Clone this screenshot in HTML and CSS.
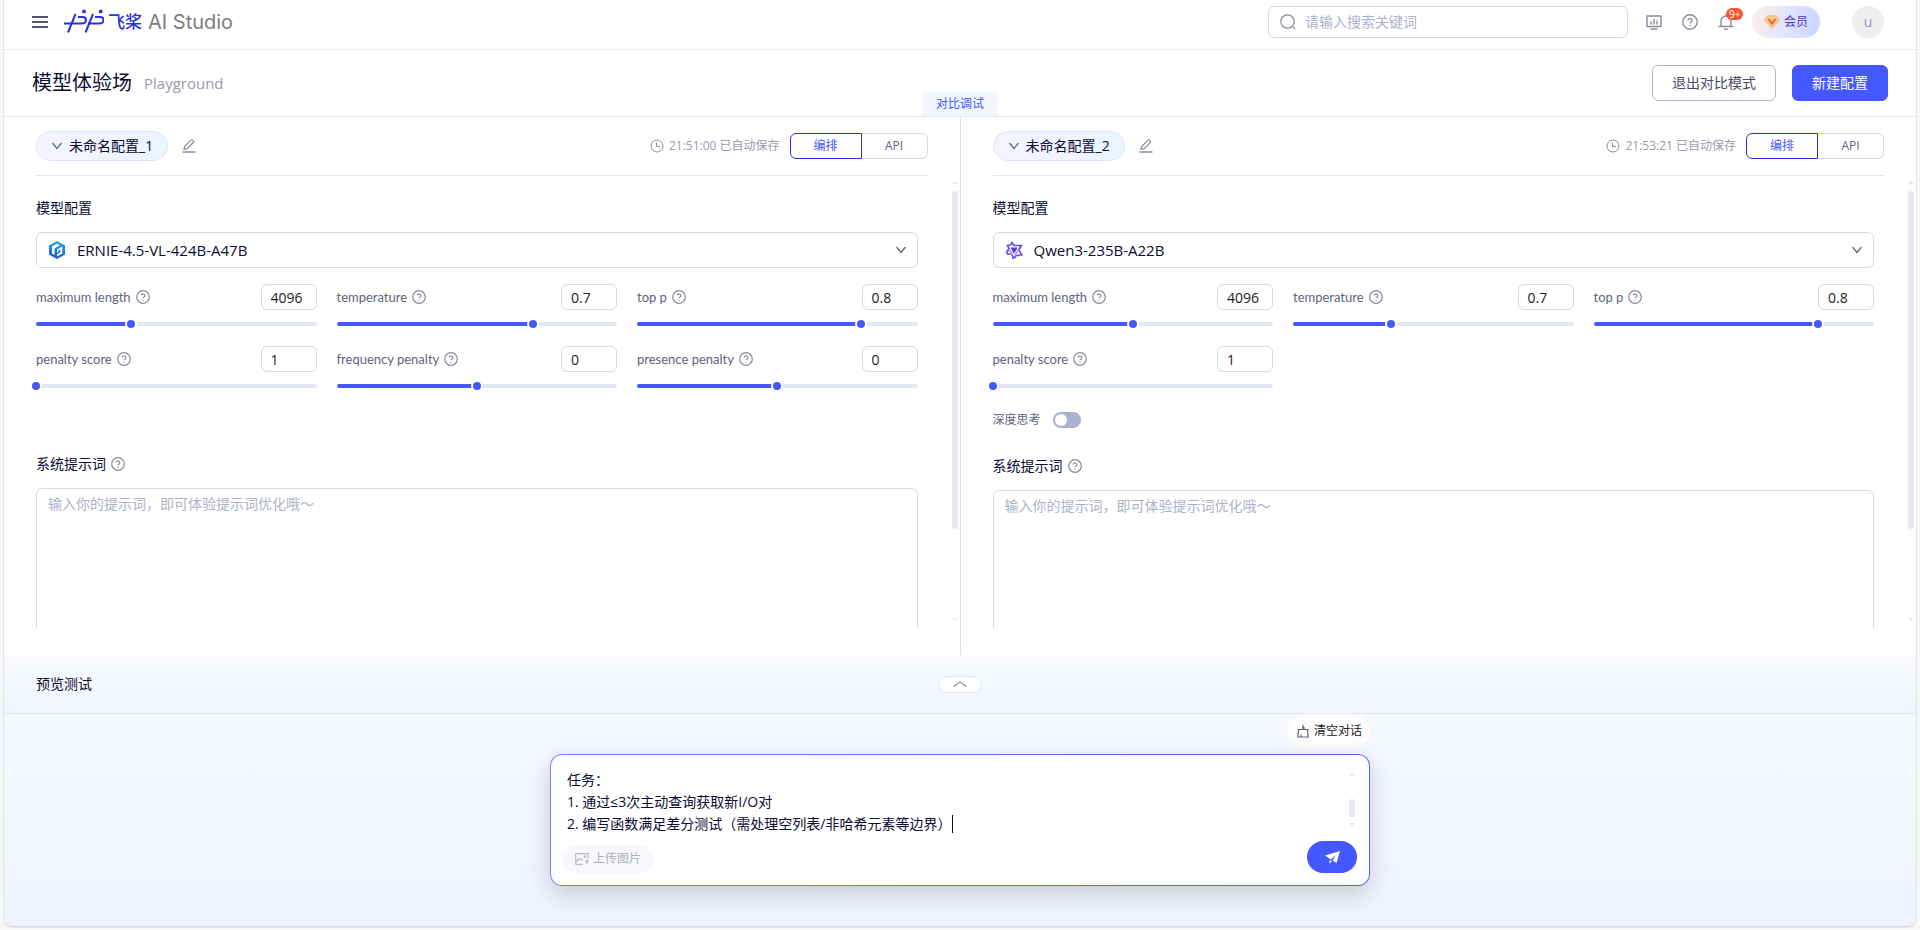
FILE: index.html
```html
<!DOCTYPE html>
<html lang="zh-CN">
<head>
    <meta charset="UTF-8">
    <meta name="viewport" content="width=device-width, initial-scale=1.0">
    <title>飞桨 AI Studio</title>
    <link rel="stylesheet" href="styles.css">
</head>

<body>
    <!-- shared icons -->
    <svg class="sprite" aria-hidden="true">
        <symbol id="i-help" viewBox="0 0 16 16">
            <circle cx="8" cy="8" r="7.2"/>
            <path d="M6 6.4a2 2 0 1 1 2.9 1.8c-.6.3-.9.6-.9 1.3M8 11v1.2"/>
        </symbol>
        <symbol id="i-down" viewBox="0 0 12 12"><path d="M1.5 3l4.5 5.5L10.500 3"/></symbol>
        <symbol id="i-edit" viewBox="0 0 14 14">
            <path d="M2 10.300l.6-2.700L9 1.200a1.200 1.200 0 0 1 1.700 0l.6.6a1.200 1.200 0 0 1 0 1.700L4.800 9.900z"/>
            <path d="M.5 13h13" stroke-width="1.500"/>
        </symbol>
        <symbol id="i-clock" viewBox="0 0 14 14"><circle cx="7" cy="7" r="6"/><path d="M6.500 3.500v4H10"/></symbol>
    </svg>

    <div class="app">
        <header class="topbar">
            <button class="menu-btn" aria-label="菜单">
                <svg viewBox="0 0 16 12"><path d="M0 1h16M0 6h16M0 11h16"/></svg>
            </button>
            <a class="brand" href="#">
                <svg class="brand-mark" viewBox="0 0 40 25">
                    <path d="M0 14.500h17.500c3 0 4.500-1.500 4.500-3.500S20.500 8 19 8h-5M11.500 5L4 23.500M29 5l-7.500 18.500M24 14.500h11c3 0 4.500-1.500 4.500-3.500S38 8 36.500 8H31"/>
                    <circle cx="20" cy="2.400" r="1.900"/><circle cx="36.700" cy="2.400" r="1.900"/>
                </svg>
                <span class="brand-cn">飞桨</span>
                <span class="brand-en">AI Studio</span>
            </a>
            <div class="search">
                <svg viewBox="0 0 16 16"><circle cx="7.500" cy="7.500" r="6.700"/><path d="M12.200 12.200l3 3"/></svg>
                <input type="text" placeholder="请输入搜索关键词" aria-label="搜索">
            </div>
            <nav class="tools">
                <button aria-label="控制台">
                    <svg viewBox="0 0 16 16"><path d="M1 2h14v10.500H1zM4.500 15h7M5 7.500v3M8 5v5.500M11 6.500v4"/></svg>
                </button>
                <button aria-label="帮助"><svg><use href="#i-help"/></svg></button>
                <button class="bell" aria-label="消息">
                    <svg viewBox="0 0 16 16"><path d="M.5 12.500h15M3 12.500V7a5 5 0 0 1 10 0v5.500M8 2V.5M6.300 14.500a1.800 1.500 0 0 0 3.400 0"/></svg>
                    <span class="badge">9+</span>
                </button>
            </nav>
            <a class="vip" href="#">
                <svg viewBox="0 0 16 14"><path fill="#fbc48a" d="M3.500 0h9L16 5l-8 9L0 5z"/><path fill="none" stroke="#d9622b" stroke-width="1.700" d="M4.500 4L8 8.500 11.500 4"/></svg>
                <span>会员</span>
            </a>
            <a class="avatar" href="#">u</a>
        </header>

        <div class="titlebar">
            <h1>模型体验场</h1>
            <span class="subtitle">Playground</span>
            <button class="btn">退出对比模式</button>
            <button class="btn btn-primary">新建配置</button>
            <span class="compare-tab">对比调试</span>
        </div>

        <main class="workspace">
            <section class="pane">
                <div class="pane-head">
                    <button class="config-name"><svg><use href="#i-down"/></svg>未命名配置_1</button>
                    <button class="edit-btn" aria-label="重命名"><svg><use href="#i-edit"/></svg></button>
                    <span class="saved"><svg><use href="#i-clock"/></svg>21:51:00 已自动保存</span>
                    <div class="segment"><button class="active">编排</button><button>API</button></div>
                </div>
                <div class="pane-body">
                    <div class="settings">
                        <label class="section-title" for="model1">模型配置</label>
                        <div class="model-select">
                            <svg class="model-icon" viewBox="0 0 18 18">
                                <defs><linearGradient id="ernie" x1="0" y1="0" x2="0" y2="1"><stop offset="0" stop-color="#22a6f7"/><stop offset="1" stop-color="#1556c8"/></linearGradient></defs>
                                <path fill="url(#ernie)" d="M9 0l8 4.500v9L9 18l-8-4.500v-9z"/>
                                <path fill="#fff" d="M9 2.600l3 1.700-5.500 3.200v6.600L4 12.600V5.500z"/>
                                <path fill="#fff" d="M14.300 5.600v7L9 15.500v-2.200l3.300-1.900V8.300L10.500 9.300v1.500L9 11.700V8.500z"/>
                            </svg>
                            <select id="model1"><option>ERNIE-4.5-VL-424B-A47B</option></select>
                            <svg class="arrow"><use href="#i-down"/></svg>
                        </div>
                        <div class="params">
                            <div class="param">
                                <label for="len1">maximum length</label><svg class="help"><use href="#i-help"/></svg>
                                <input class="num" id="len1" type="text" value="4096">
                                <div class="slider" style="--v: 34%"><input type="range" aria-label="maximum length" value="34"></div>
                            </div>
                            <div class="param">
                                <label for="temp1">temperature</label><svg class="help"><use href="#i-help"/></svg>
                                <input class="num" id="temp1" type="text" value="0.7">
                                <div class="slider" style="--v: 70%"><input type="range" aria-label="temperature" value="70"></div>
                            </div>
                            <div class="param">
                                <label for="topp1">top p</label><svg class="help"><use href="#i-help"/></svg>
                                <input class="num" id="topp1" type="text" value="0.8">
                                <div class="slider" style="--v: 80%"><input type="range" aria-label="top p" value="80"></div>
                            </div>
                            <div class="param">
                                <label for="score1">penalty score</label><svg class="help"><use href="#i-help"/></svg>
                                <input class="num" id="score1" type="text" value="1">
                                <div class="slider" style="--v: 0%"><input type="range" aria-label="penalty score" value="0"></div>
                            </div>
                            <div class="param">
                                <label for="freq1">frequency penalty</label><svg class="help"><use href="#i-help"/></svg>
                                <input class="num" id="freq1" type="text" value="0">
                                <div class="slider" style="--v: 50%"><input type="range" aria-label="frequency penalty" value="50"></div>
                            </div>
                            <div class="param">
                                <label for="pres1">presence penalty</label><svg class="help"><use href="#i-help"/></svg>
                                <input class="num" id="pres1" type="text" value="0">
                                <div class="slider" style="--v: 50%"><input type="range" aria-label="presence penalty" value="50"></div>
                            </div>
                        </div>
                        <div class="prompt-title prompt-gap">
                            <label for="prompt1">系统提示词</label><svg class="help"><use href="#i-help"/></svg>
                        </div>
                        <textarea class="prompt" id="prompt1" placeholder="输入你的提示词，即可体验提示词优化哦～"></textarea>
                    </div>
                    <div class="scrollbar"><i class="up"></i><i class="thumb"></i><i class="down"></i></div>
                </div>
            </section>

            <section class="pane">
                <div class="pane-head">
                    <button class="config-name"><svg><use href="#i-down"/></svg>未命名配置_2</button>
                    <button class="edit-btn" aria-label="重命名"><svg><use href="#i-edit"/></svg></button>
                    <span class="saved"><svg><use href="#i-clock"/></svg>21:53:21 已自动保存</span>
                    <div class="segment"><button class="active">编排</button><button>API</button></div>
                </div>
                <div class="pane-body">
                    <div class="settings">
                        <label class="section-title" for="model2">模型配置</label>
                        <div class="model-select">
                            <svg class="model-icon" viewBox="0 0 18 18">
                                <g fill="none" stroke="#6b4be8" stroke-width="1.700">
                                    <path d="M6.800 1.200L9 4.500h7.300l-1.500 3M16 5l-2.200 3.800 3 5.200h-3.500M14.500 14.500H11L9.500 17H7M8.500 16.500l-2-3.500H2.500l-1.200-2.200M2 11l2-3.500L2.500 4.500 5.500 4M5.500 4.200L7.300 1"/>
                                    <path d="M4 8l3.500 6M13.500 8.500L10 14.500" stroke="#a898f5"/>
                                </g>
                                <path fill="#5b35e0" d="M5.500 6.500h7.200L9 12.800z"/>
                            </svg>
                            <select id="model2"><option>Qwen3-235B-A22B</option></select>
                            <svg class="arrow"><use href="#i-down"/></svg>
                        </div>
                        <div class="params">
                            <div class="param">
                                <label for="len2">maximum length</label><svg class="help"><use href="#i-help"/></svg>
                                <input class="num" id="len2" type="text" value="4096">
                                <div class="slider" style="--v: 50%"><input type="range" aria-label="maximum length" value="50"></div>
                            </div>
                            <div class="param">
                                <label for="temp2">temperature</label><svg class="help"><use href="#i-help"/></svg>
                                <input class="num" id="temp2" type="text" value="0.7">
                                <div class="slider" style="--v: 35%"><input type="range" aria-label="temperature" value="35"></div>
                            </div>
                            <div class="param">
                                <label for="topp2">top p</label><svg class="help"><use href="#i-help"/></svg>
                                <input class="num" id="topp2" type="text" value="0.8">
                                <div class="slider" style="--v: 80%"><input type="range" aria-label="top p" value="80"></div>
                            </div>
                            <div class="param">
                                <label for="score2">penalty score</label><svg class="help"><use href="#i-help"/></svg>
                                <input class="num" id="score2" type="text" value="1">
                                <div class="slider" style="--v: 0%"><input type="range" aria-label="penalty score" value="0"></div>
                            </div>
                        </div>
                        <div class="thinking">
                            <label for="think">深度思考</label>
                            <input class="switch" id="think" type="checkbox">
                        </div>
                        <div class="prompt-title">
                            <label for="prompt2">系统提示词</label><svg class="help"><use href="#i-help"/></svg>
                        </div>
                        <textarea class="prompt" id="prompt2" placeholder="输入你的提示词，即可体验提示词优化哦～"></textarea>
                    </div>
                    <div class="scrollbar"><i class="up"></i><i class="thumb"></i><i class="down"></i></div>
                </div>
            </section>
        </main>

        <section class="preview">
            <div class="preview-head">
                <h2>预览测试</h2>
                <button class="collapse" aria-label="展开"><svg viewBox="0 0 14 6"><path d="M.5 5.500L7 1l6.500 4.500"/></svg></button>
            </div>
            <div class="chat">
                <button class="clear-btn">
                    <svg viewBox="0 0 12 13"><path d="M6 0v4M.5 4.500h11M1.500 5L.8 12h10.400l-.7-7M4 12V9.500M5 2.500h2v2"/></svg>
                    清空对话
                </button>
                <div class="composer">
                    <div class="composer-text">
                        <textarea rows="3" aria-label="对话输入">任务：
1. 通过≤3次主动查询获取新I/O对
2. 编写函数满足差分测试（需处理空列表/非哈希元素等边界）</textarea>
                        <span class="caret"></span>
                        <div class="scrollbar"><i class="up"></i><i class="thumb"></i><i class="down"></i></div>
                    </div>
                    <div class="composer-bar">
                        <button class="upload-btn">
                            <svg viewBox="0 0 14 12"><path d="M8 11.300H.7V.7h12.600v5M1 9l3.500-3.500L8 7.500M12 11.500V7.500M10.300 9L12 7.300 13.700 9"/><circle cx="10" cy="3.500" r=".8"/></svg>
                            上传图片
                        </button>
                        <button class="send-btn" aria-label="发送">
                            <svg viewBox="0 0 15 13"><path d="M0 4.500L15 0l-3.500 12-4-2.500L11 4 5.800 8.500zM4.500 9l2.500 1.500-2.500 2z"/></svg>
                        </button>
                    </div>
                </div>
            </div>
        </section>
    </div>
</body>
</html>
```
FILE: styles.css
```css
* {
    box-sizing: border-box;
}

body {
    margin: 0;
    padding: 0 4px 3px;
    height: 100vh;
    background-color: #f7f7f8;
    font-family: "Open Sans", "Noto Sans CJK SC", sans-serif;
    font-size: 14px;
    line-height: 22px;
    color: #0b0b33;
}

button, input, select, textarea {
    font: inherit;
    color: inherit;
}

button {
    padding: 0;
    border: none;
    background: none;
    cursor: pointer;
}

a {
    text-decoration: none;
}

h1, h2 {
    margin: 0;
    font-weight: normal;
}

svg {
    display: block;
    flex: none;
    fill: none;
    stroke: #8a8aa3;
    stroke-width: 1.2;
}

.sprite {
    position: absolute;
    width: 0;
    height: 0;
}

.app {
    display: flex;
    flex-direction: column;
    height: 100%;
    background-color: white;
    border-bottom: 1px solid #d9dbe3;
    border-radius: 0 0 8px 8px;
    box-shadow: 0 0 0 1px #e6e6ea;
    overflow: hidden;
}

/* top bar */
.topbar {
    display: flex;
    align-items: center;
    height: 50px;
    padding: 0 32px 6px 28px;
    border-bottom: 1px solid #e4e8f5;
}

.menu-btn {
    margin-right: 16px;
}

.menu-btn svg {
    width: 16px;
    height: 12px;
    stroke: #56567a;
    stroke-width: 2;
}

.brand {
    display: flex;
    align-items: center;
    gap: 4px;
    margin-right: auto;
}

.brand-mark {
    width: 40px;
    height: 25px;
    stroke: #2932e1;
    stroke-width: 2;
}

.brand-mark circle {
    fill: #2932e1;
    stroke: none;
}

.brand-cn {
    font-size: 17px;
    font-weight: 500;
    color: #2932e1;
}

.brand-en {
    margin-left: 2px;
    font-family: Inter, sans-serif;
    font-size: 20px;
    color: #7d7d7d;
}

.search {
    display: flex;
    align-items: center;
    gap: 9px;
    width: 360px;
    height: 32px;
    margin-right: 18px;
    padding: 0 11px;
    border: 1px solid #d5d8ea;
    border-radius: 6px;
}

.search svg {
    width: 16px;
    height: 16px;
}

.search input {
    flex: 1;
    padding: 0;
    border: none;
    outline: none;
    background: none;
}

::placeholder {
    color: #adb1cb;
}

.tools {
    display: flex;
    gap: 20px;
}

.tools svg {
    width: 16px;
    height: 16px;
    stroke: #8a8aa3;
    stroke-width: 1.4;
}

.bell {
    position: relative;
}

.badge {
    position: absolute;
    left: 8px;
    top: -6px;
    padding: 0 3px;
    border-radius: 6px;
    background-color: #ff5630;
    color: white;
    font-size: 10px;
    line-height: 12px;
}

.vip {
    display: flex;
    align-items: center;
    gap: 4px;
    height: 32px;
    margin-left: 18px;
    padding: 0 12px;
    border-radius: 16px;
    background: linear-gradient(100deg, #fdf0ec, #e1e4fc 50%, #cbd3ff);
    color: #5236c4;
    font-size: 12px;
}

.vip svg {
    width: 16px;
    height: 14px;
    stroke: none;
}

.avatar {
    width: 32px;
    height: 32px;
    margin-left: 32px;
    border-radius: 50%;
    background-color: #efeff0;
    color: #8c9cc4;
    line-height: 32px;
    text-align: center;
}

/* page title */
.titlebar {
    position: relative;
    display: flex;
    align-items: center;
    height: 67px;
    padding: 0 28px;
    border-bottom: 1px solid #e4e8f5;
}

.titlebar h1 {
    font-size: 20px;
}

.subtitle {
    margin-left: 12px;
    margin-right: auto;
    color: #9a9ab0;
    font-size: 15px;
}

.btn {
    height: 36px;
    padding: 0 19px;
    border: 1px solid #b2b6cc;
    border-radius: 6px;
    color: #4a4a66;
}

.btn-primary {
    margin-left: 16px;
    border-color: #4558ff;
    background-color: #4558ff;
    color: white;
}

.compare-tab {
    position: absolute;
    left: 50%;
    bottom: 0;
    width: 76px;
    height: 24px;
    margin-left: -38px;
    border-radius: 4px 4px 0 0;
    background-color: #f0f5ff;
    color: #4558ff;
    font-size: 12px;
    line-height: 24px;
    text-align: center;
}

/* the two configs side by side */
.workspace {
    flex: 1;
    display: flex;
    min-height: 0;
}

.pane {
    flex: 1;
    display: flex;
    flex-direction: column;
    min-width: 0;
    padding: 0 2px 27px 24px;
}

.pane + .pane {
    border-left: 1px solid #d8dced;
}

.pane-head {
    display: flex;
    align-items: center;
    height: 59px;
    margin-left: 8px;
    margin-right: 30px;
    padding: 12px 0;
    border-bottom: 1px solid #e4e8f5;
}

.config-name {
    display: flex;
    align-items: center;
    gap: 6px;
    height: 30px;
    padding: 0 14px;
    border: 1px solid #dbe4fb;
    border-radius: 15px;
    background: linear-gradient(90deg, #f4f4ff, #ecf4ff);
}

.config-name svg {
    width: 12px;
    height: 12px;
    stroke: #62627f;
}

.edit-btn {
    margin-left: 14px;
    margin-right: auto;
}

.edit-btn svg {
    width: 14px;
    height: 14px;
}

.saved {
    display: flex;
    align-items: center;
    gap: 5px;
    margin-right: 10px;
    color: #9a9ab0;
    font-size: 12px;
}

.saved svg {
    width: 14px;
    height: 14px;
    stroke-width: 1;
}

.segment {
    display: flex;
    width: 138px;
    height: 26px;
    font-size: 12px;
}

.segment button {
    flex: 1;
    border: 1px solid #d9d9df;
    border-left: none;
    border-radius: 0 6px 6px 0;
    color: #62627f;
}

.segment .active {
    flex: none;
    width: 72px;
    border: 1px solid #2932e1;
    border-radius: 6px 0 0 6px;
    color: #4558ff;
}

.pane-body {
    flex: 1;
    display: flex;
    gap: 34px;
    min-height: 0;
    overflow: hidden;
}

.settings {
    flex: 1;
    min-width: 0;
    padding-top: 21px;
    padding-left: 8px;
}

.section-title {
    display: block;
}

.model-select {
    display: flex;
    align-items: center;
    gap: 7px;
    height: 36px;
    margin: 13px 0 16px;
    padding: 0 10px 0 11px;
    border: 1px solid #d5d8ea;
    border-radius: 6px;
}

.model-select select {
    flex: 1;
    padding: 0 4px;
    border: none;
    outline: none;
    appearance: none;
    background: none;
    font-size: 15px;
}

.model-icon {
    width: 18px;
    height: 18px;
    stroke: none;
}

.arrow {
    width: 12px;
    height: 12px;
    stroke: #62627f;
}

.params {
    display: grid;
    grid-template-columns: repeat(3, 1fr);
    gap: 18px 20px;
}

.param {
    display: flex;
    flex-wrap: wrap;
    align-items: center;
    align-content: flex-start;
    height: 44px;
}

.param label {
    color: #62627f;
    font-family: Lato, sans-serif;
    font-size: 13px;
}

.help {
    width: 14px;
    height: 14px;
    margin-left: 5px;
    stroke-width: 1.4;
}

.num {
    width: 56px;
    height: 26px;
    margin-left: auto;
    padding: 0 9px;
    border: 1px solid #d9d9df;
    border-radius: 6px;
    color: #222;
}

/* filled part of the track follows --v */
.slider {
    width: 100%;
    height: 4px;
    margin-top: 12px;
    border-radius: 2px;
    background: linear-gradient(90deg, #4558ff var(--v), #e4e8f4 var(--v));
}

.slider input {
    display: block;
    width: calc(100% + 12px);
    height: 4px;
    margin: 0 -6px;
    appearance: none;
    background: none;
}

.slider input::-webkit-slider-thumb {
    appearance: none;
    width: 12px;
    height: 12px;
    border: 2px solid white;
    border-radius: 50%;
    background-color: #4558ff;
}

.thinking {
    display: flex;
    align-items: center;
    gap: 12px;
    margin-top: 19px;
    margin-bottom: 24px;
    color: #62627f;
    font-size: 12px;
}

.switch {
    width: 28px;
    height: 16px;
    margin: 0;
    padding: 2px;
    appearance: none;
    border-radius: 8px;
    background-color: #adb1cb;
}

.switch::before {
    content: "";
    display: block;
    width: 12px;
    height: 12px;
    border-radius: 50%;
    background-color: white;
}

.prompt-title {
    display: flex;
    align-items: center;
    margin-bottom: 13px;
}

.prompt-gap {
    margin-top: 63px;
}

.prompt {
    display: block;
    width: 100%;
    height: 300px;
    padding: 4px 11px;
    border: 1px solid #d9d9df;
    border-radius: 6px;
    outline: none;
    resize: none;
}

.scrollbar {
    display: flex;
    flex-direction: column;
    width: 6px;
    padding: 5px 0 7px;
}

.scrollbar .up {
    border: 3px solid transparent;
    border-top: none;
    border-bottom-color: #e4e8f4;
}

.scrollbar .thumb {
    height: 338px;
    margin: 7px 0 auto;
    border-radius: 3px;
    background-color: #e4e8f4;
}

.scrollbar .down {
    border: 3px solid transparent;
    border-bottom: none;
    border-top-color: #e4e8f4;
}

/* preview */
.preview-head {
    display: grid;
    grid-template-columns: 1fr auto 1fr;
    align-items: center;
    height: 59px;
    padding: 0 32px;
    border-bottom: 1px solid #e4e8f5;
    background: linear-gradient(#f8faff, #f0f4fe);
}

.preview-head h2 {
    font-size: 14px;
}

.collapse {
    display: flex;
    align-items: center;
    justify-content: center;
    width: 44px;
    height: 17px;
    border: 1px solid #e4e8f5;
    border-radius: 9px;
    background-color: white;
}

.collapse svg {
    width: 14px;
    height: 6px;
}

.chat {
    display: flex;
    flex-direction: column;
    align-items: center;
    padding: 0 24px 40px;
    background: linear-gradient(#f5f8ff, #f0f3fd);
}

.clear-btn {
    display: flex;
    align-items: center;
    gap: 5px;
    height: 34px;
    margin-left: 738px;
    padding: 0 8px 0 9px;
    border-radius: 17px;
    background-color: #fdfdfe;
    color: #222;
    font-size: 12px;
}

.clear-btn svg {
    width: 12px;
    height: 13px;
    stroke: #62627f;
}

.composer {
    width: 100%;
    max-width: 820px;
    margin-top: 6px;
    padding: 14px 12px 12px;
    border: 1px solid transparent;
    border-radius: 12px;
    background: linear-gradient(white, white) padding-box, linear-gradient(90deg, #8080ff, #4a6cf0) border-box;
    box-shadow: 0 8px 24px rgba(30, 35, 60, 0.2);
}

.composer-text {
    position: relative;
    display: flex;
    padding: 0 2px 0 4px;
}

.composer-text textarea {
    flex: 1;
    height: 66px;
    padding: 0;
    border: none;
    outline: none;
    resize: none;
    overflow: hidden;
}

.caret {
    position: absolute;
    left: 389px;
    bottom: 2px;
    width: 1px;
    height: 18px;
    background-color: #0b0b33;
}

.composer-text .scrollbar {
    padding: 4px 0 9px;
}

.composer-text .thumb {
    height: 18px;
    margin: auto 0 6px;
}

.composer-bar {
    display: flex;
    align-items: flex-end;
    justify-content: space-between;
    margin-top: 6px;
}

.upload-btn {
    display: flex;
    align-items: center;
    gap: 4px;
    height: 28px;
    padding: 0 12px;
    border-radius: 14px;
    background-color: #f7f8fd;
    color: #adadbf;
    font-size: 12px;
}

.upload-btn svg {
    width: 14px;
    height: 12px;
    stroke: #b9b9ca;
}

.send-btn {
    display: flex;
    align-items: center;
    justify-content: center;
    width: 50px;
    height: 32px;
    border-radius: 16px;
    background-color: #4558ff;
}

.send-btn svg {
    width: 15px;
    height: 13px;
    fill: white;
    stroke: none;
}
```
